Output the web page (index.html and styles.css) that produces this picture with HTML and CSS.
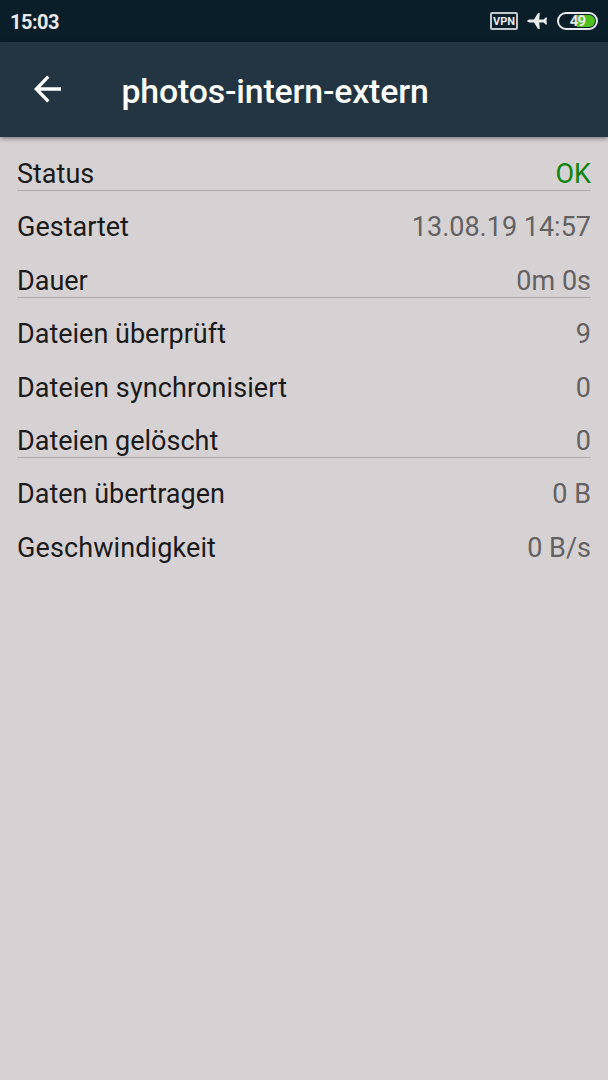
FILE: index.html
```
<!DOCTYPE html>
<html lang="de">
<head>
  <meta charset="UTF-8">
  <title>photos-intern-extern</title>
  <link rel="stylesheet" href="styles.css">
</head>
<body>
  <div class="status-bar">
    <span class="clock">15:03</span>
    <div class="status-icons">
      <span class="vpn">VPN</span>
      <svg class="plane" width="22" height="20" viewBox="0 0 22 20">
        <path d="M0.8 10 L3 8.6 H8 L12 2 H13.8 L13.2 8.6 H17.6 L19.6 6.4 H21 L20.5 10 L21 13.6 H19.6 L17.6 11.4 H13.2 L13.8 18 H12 L8 11.4 H3 Z" fill="#e8eaeb"/>
      </svg>
      <div class="battery"><span>49</span></div>
    </div>
  </div>

  <header class="toolbar">
    <svg class="back" width="28" height="28" viewBox="0 0 28 28">
      <path d="M27 14 H2.5 M14.3 1.7 L2.3 14 L14.3 26.3" fill="none" stroke="#fff" stroke-width="3.3"/>
    </svg>
    <h1>photos-intern-extern</h1>
  </header>

  <main class="details">
    <div class="row line"><span>Status</span><span class="value ok">OK</span></div>
    <div class="row"><span>Gestartet</span><span class="value">13.08.19 14:57</span></div>
    <div class="row line"><span>Dauer</span><span class="value">0m 0s</span></div>
    <div class="row"><span>Dateien überprüft</span><span class="value">9</span></div>
    <div class="row"><span class="wide">Dateien synchronisiert</span><span class="value">0</span></div>
    <div class="row line"><span>Dateien gelöscht</span><span class="value">0</span></div>
    <div class="row"><span>Daten übertragen</span><span class="value">0 B</span></div>
    <div class="row"><span class="wide">Geschwindigkeit</span><span class="value">0 B/s</span></div>
  </main>
</body>
</html>
```
FILE: styles.css
```
* {
  box-sizing: border-box;
}
body {
  margin: 0;
  min-height: 1080px;
  background-color: #d6d2d3;
  font-family: Roboto, sans-serif;
  color: #1b1a1b;
}
.status-bar {
  display: flex;
  align-items: center;
  justify-content: space-between;
  height: 42px;
  padding: 0 10px 0 10px;
  background-color: #0a1e2a;
  color: #e8eaeb;
}
.clock {
  font-size: 20px;
  font-weight: 700;
  letter-spacing: -0.5px;
  line-height: 24px;
  padding-top: 2px;
}
.status-icons {
  display: flex;
  align-items: center;
}
.vpn {
  width: 28px;
  height: 18px;
  border: 2px solid #c3c8cb;
  border-radius: 2px;
  font-size: 11px;
  font-weight: 700;
  line-height: 15px;
  text-align: center;
}
.plane {
  margin: 0 9px 0 8px;
}
.battery {
  width: 41px;
  height: 18px;
  border: 2px solid #e8eaeb;
  border-radius: 9px;
  padding: 1px;
  background: linear-gradient(90deg, #0a1e2a 49%, #4fc01c 49%) content-box;
  font-size: 15px;
  font-weight: 700;
  letter-spacing: -0.8px;
  line-height: 12px;
  text-align: center;
}
.toolbar {
  display: flex;
  align-items: center;
  height: 95px;
  padding-left: 33.5px;
  background-color: #233542;
  box-shadow: 0 1px 5px rgba(0,0,0,0.5);
}
.back {
  margin-bottom: 1px;
}
.toolbar h1 {
  margin: 5px 0 0 60px;
  color: white;
  font-size: 33.8px;
  font-weight: 500;
  letter-spacing: -0.15px;
  line-height: 40px;
}
.details {
  padding: 0.2px 17px 0;
}
.row {
  display: flex;
  justify-content: space-between;
  align-items: flex-end;
  height: 53.45px;
  border-bottom: 1px solid transparent;
  font-size: 27px;
  line-height: 29.8px;
}
.line {
  border-bottom-color: #b0adae;
}
.wide {
  letter-spacing: 0.1px;
}
.value {
  color: #636162;
}
.ok {
  color: #0b840b;
}
```
